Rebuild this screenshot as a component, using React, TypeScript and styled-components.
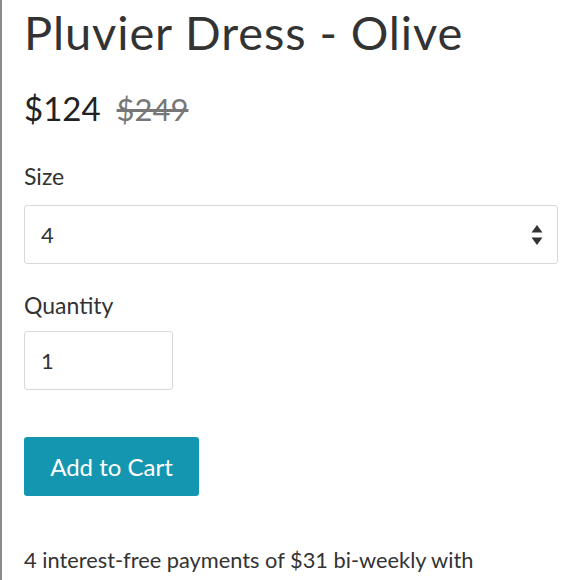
import React from 'react';
import styled, { createGlobalStyle } from 'styled-components';

const Global = createGlobalStyle`
  html, body {
    margin: 0;
    padding: 0;
    background: #fff;
  }
  body {
    font-family: Lato, "Open Sans", sans-serif;
    color: #333;
  }
`;

const Page = styled.div`
  width: 580px;
  height: 580px;
  overflow: hidden;
  border-left: 2px solid #8a8a8a;
  box-sizing: border-box;
  padding: 4px 0 0 22px;
`;

const Title = styled.h1`
  margin: 0;
  font-size: 47px;
  font-weight: 400;
  line-height: 56px;
  letter-spacing: 0.9px;
  color: #333;
`;

const PriceRow = styled.div`
  display: flex;
  align-items: baseline;
  gap: 16px;
  margin-top: 28px;
  line-height: 40px;
`;

const Price = styled.span`
  font-size: 33px;
  color: #222;
`;

const OldPrice = styled.s`
  font-size: 31px;
  color: #777;
`;

const Field = styled.div<{ top: number }>`
  display: flex;
  flex-direction: column;
  margin-top: ${(p) => p.top}px;
`;

const Label = styled.label<{ gap: number }>`
  font-size: 23px;
  color: #333;
  line-height: 30px;
  margin-bottom: ${(p) => p.gap}px;
`;

const Box = styled.div<{ width: number }>`
  box-sizing: border-box;
  width: ${(p) => p.width}px;
  height: 59px;
  border: 1px solid #d9d9d9;
  border-radius: 3px;
  display: flex;
  align-items: center;
  justify-content: space-between;
  padding: 0 14px 0 16px;
  font-size: 22px;
  color: #333;
`;

const Button = styled.button`
  margin-top: 47px;
  width: 175px;
  height: 59px;
  border: none;
  border-radius: 3px;
  background: #1596b0;
  color: #fff;
  font-family: inherit;
  font-size: 24px;
  cursor: pointer;
`;

const Note = styled.p`
  margin: 50px 0 0;
  font-size: 21.8px;
  color: #333;
  white-space: nowrap;
`;

const Arrows = () => (
  <svg width="12" height="22" viewBox="0 0 12 22">
    <path d="M6 1 L11.5 8.5 L0.5 8.5 Z" fill="#333" />
    <path d="M0.5 13.5 L11.5 13.5 L6 21 Z" fill="#333" />
  </svg>
);

export default function App() {
  return (
    <>
      <Global />
      <Page>
        <Title>Pluvier Dress - Olive</Title>
        <PriceRow>
          <Price>$124</Price>
          <OldPrice>$249</OldPrice>
        </PriceRow>
        <Field top={32}>
          <Label gap={14}>Size</Label>
          <Box width={534}>
            <span>4</span>
            <Arrows />
          </Box>
        </Field>
        <Field top={26}>
          <Label gap={11}>Quantity</Label>
          <Box width={149}>
            <span>1</span>
          </Box>
        </Field>
        <Button>Add to Cart</Button>
        <Note>4 interest-free payments of $31 bi-weekly with</Note>
      </Page>
    </>
  );
}
